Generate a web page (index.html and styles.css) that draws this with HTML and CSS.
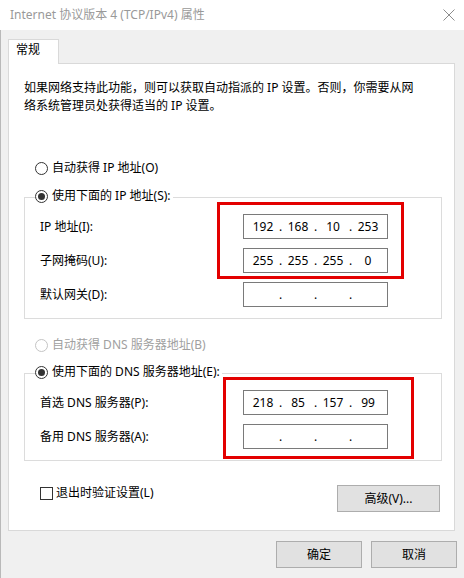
FILE: index.html
```html
<!DOCTYPE html>
<html lang="zh-CN">
<head>
<meta charset="utf-8">
<title>Internet 协议版本 4 (TCP/IPv4) 属性</title>
<link rel="stylesheet" href="styles.css">
</head>
<body>
<div class="window">
  <div class="titlebar">
    <span class="title">Internet 协议版本 4 (TCP/IPv4) 属性</span>
    <svg class="close" width="12" height="12" viewBox="0 0 12 12"><path d="M0.5 0.5 L11.5 11.5 M11.5 0.5 L0.5 11.5" stroke="#8c8c8c" stroke-width="1" fill="none"/></svg>
  </div>
  <div class="main">
    <div class="tabs"><div class="tab">常规</div></div>
    <div class="panel">
      <p class="intro">如果网络支持此功能，则可以获取自动指派的 IP 设置。否则，你需要从网<br>络系统管理员处获得适当的 IP 设置。</p>

      <div class="option"><span class="radio"></span><span>自动获得 IP 地址(O)</span></div>
      <div class="group">
        <div class="caption"><span class="radio checked"></span><span>使用下面的 IP 地址(S):</span></div>
        <div class="field">
          <span class="label">IP 地址(I):</span>
          <div class="ip"><span>192</span><span>.</span><span>168</span><span>.</span><span>10</span><span>.</span><span>253</span></div>
        </div>
        <div class="field">
          <span class="label">子网掩码(U):</span>
          <div class="ip"><span>255</span><span>.</span><span>255</span><span>.</span><span>255</span><span>.</span><span>0</span></div>
        </div>
        <div class="field">
          <span class="label">默认网关(D):</span>
          <div class="ip"><span></span><span>.</span><span></span><span>.</span><span></span><span>.</span><span></span></div>
        </div>
      </div>

      <div class="option option-b disabled"><span class="radio"></span><span>自动获得 DNS 服务器地址(B)</span></div>
      <div class="group group-dns">
        <div class="caption"><span class="radio checked"></span><span>使用下面的 DNS 服务器地址(E):</span></div>
        <div class="field">
          <span class="label">首选 DNS 服务器(P):</span>
          <div class="ip"><span>218</span><span>.</span><span>85</span><span>.</span><span>157</span><span>.</span><span>99</span></div>
        </div>
        <div class="field">
          <span class="label">备用 DNS 服务器(A):</span>
          <div class="ip"><span></span><span>.</span><span></span><span>.</span><span></span><span>.</span><span></span></div>
        </div>
      </div>

      <div class="actions">
        <div class="check"><span class="box"></span><span>退出时验证设置(L)</span></div>
        <button class="btn btn-adv">高级(V)...</button>
      </div>
    </div>
    <div class="footer">
      <button class="btn btn-foot">确定</button>
      <button class="btn btn-foot">取消</button>
    </div>
  </div>
  <div class="mark mark-ip"></div>
  <div class="mark mark-dns"></div>
</div>
</body>
</html>
```
FILE: styles.css
```css
* { box-sizing: border-box; }
html, body { margin: 0; padding: 0; }
body {
  width: 464px;
  height: 578px;
  overflow: hidden;
  background: #f0f0f0;
  font-family: "Noto Sans", "Noto Sans CJK SC", sans-serif;
  font-size: 12px;
  line-height: 18px;
  color: #000;
}
.window {
  position: relative;
  width: 464px;
  height: 578px;
}
.titlebar {
  height: 30px;
  background: #fff;
  display: flex;
  align-items: center;
  justify-content: space-between;
  padding: 0 9px 0 10px;
}
.title { color: #999; }
.close { display: block; }

.main {
  height: 548px;
  border-left: 1px solid #b9b9b9;
  padding: 9px 7px 0 7px;
}
.tabs { display: flex; }
.tab {
  position: relative;
  z-index: 1;
  width: 51px;
  height: 25px;
  margin-bottom: -1px;
  padding: 1px 0 0 7px;
  background: #fff;
  border: 1px solid #d9d9d9;
  border-bottom: none;
}
.panel {
  width: 447px;
  height: 468px;
  background: #fff;
  border: 1px solid #d9d9d9;
  padding: 15px 12px 0 15px;
}
.intro { margin: 0; line-height: 18px; }

.option {
  display: flex;
  align-items: center;
  gap: 4px;
  height: 18px;
  margin: 44px 0 0 11px;
}
.option-b { margin-top: 17px; }
.disabled { color: #a0a0a0; }
.disabled .radio { border-color: #c4c4c4; }

.radio {
  width: 13px;
  height: 13px;
  flex: none;
  border: 1px solid #333;
  border-radius: 50%;
  background: #fff;
  display: flex;
  align-items: center;
  justify-content: center;
}
.radio.checked::after {
  content: "";
  width: 7px;
  height: 7px;
  border-radius: 50%;
  background: #333;
}

.group {
  margin-top: 20px;
  border: 1px solid #dcdcdc;
  padding: 0 0 11px 15px;
}
.group-dns { margin-top: 19px; }
.caption {
  display: flex;
  align-items: center;
  gap: 4px;
  width: fit-content;
  height: 18px;
  margin: -11px 0 0 -5px;
  padding-right: 2px;
  background: #fff;
}
.field {
  display: flex;
  align-items: center;
  height: 25px;
  margin-top: 9px;
}
.label { width: 203px; flex: none; }
.ip {
  width: 145px;
  height: 25px;
  border: 1px solid #7a7a7a;
  padding-left: 5px;
  display: grid;
  grid-template-columns: 28px 7px 28px 7px 28px 7px 28px;
  align-items: center;
  text-align: center;
}

.actions {
  display: flex;
  justify-content: space-between;
  align-items: flex-start;
  margin: 24px 2px 0 16px;
}
.check {
  display: flex;
  align-items: center;
  gap: 3px;
  height: 18px;
  margin-top: -1px;
}
.box {
  width: 13px;
  height: 13px;
  border: 1px solid #333;
  background: #fff;
}
.btn {
  font: inherit;
  color: #000;
  background: #e1e1e1;
  border: 1px solid #adadad;
  border-radius: 0;
  padding: 0;
  height: 27px;
}
.btn-adv { width: 103px; }
.footer {
  display: flex;
  justify-content: flex-end;
  gap: 9px;
  margin-top: 10px;
}
.btn-foot { width: 86px; }

.mark {
  position: absolute;
  border: 3px solid #e30000;
  pointer-events: none;
}
.mark-ip { left: 217px; top: 202px; width: 187px; height: 77px; }
.mark-dns { left: 223px; top: 377px; width: 191px; height: 82px; }
```
